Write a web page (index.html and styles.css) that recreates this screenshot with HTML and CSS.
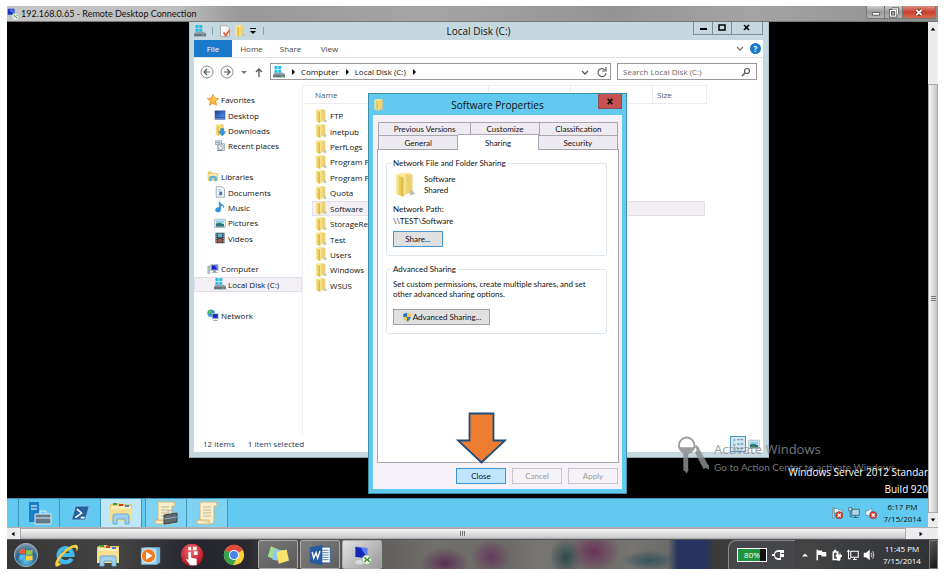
FILE: index.html
```html
<!DOCTYPE html>
<html lang="en">
<head>
<meta charset="utf-8">
<title>192.168.0.65 - Remote Desktop Connection</title>
<link rel="stylesheet" href="styles.css">
</head>
<body>
<svg class="defs" aria-hidden="true">
  <defs>
    <linearGradient id="gold" x1="0" x2="1"><stop offset="0" stop-color="#fdf0a4"/><stop offset="1" stop-color="#dcae33"/></linearGradient>
    <linearGradient id="blue" x1="0" y1="0" x2="1" y2="1"><stop offset="0" stop-color="#1d3f96"/><stop offset="1" stop-color="#4f9be6"/></linearGradient>
    <radialGradient id="orb" cx=".5" cy=".75" r=".7"><stop offset="0" stop-color="#5fc6ee"/><stop offset=".6" stop-color="#2b6591"/><stop offset="1" stop-color="#7d97a8"/></radialGradient>
    <radialGradient id="redball" cx=".45" cy=".3" r=".7"><stop offset="0" stop-color="#f06a72"/><stop offset="1" stop-color="#b50f1f"/></radialGradient>
  </defs>
  <symbol id="folder" viewBox="0 0 16 16"><path d="M2 1l4-1h6v13l-5 2z" fill="#f7e9a0"/><path d="M8 1h5v12l-5 1z" fill="#ecd071"/><path d="M2 1l5 2v13l-5-2z" fill="url(#gold)"/><path d="M7 3l2-1v12l-2 2z" fill="#f5e08a"/><path d="M12 11l3 3-4 1z" fill="#b9c2b5"/></symbol>
  <symbol id="star" viewBox="0 0 16 16"><path d="M8 .5l2.200 5 5.300.5-4 3.700 1.200 5.500L8 12.300l-4.700 2.900 1.200-5.500-4-3.700 5.300-.5z" fill="#fdb73a" stroke="#e8891c"/><path d="M8 3l1.400 3.400 3 .3-4.400 2z" fill="#ffe08a"/></symbol>
  <symbol id="desktop" viewBox="0 0 16 16"><path d="M1 2h14v12H1z" fill="#2c4f9e"/><path d="M2 3h12v8H2z" fill="url(#blue)"/><path d="M1 12h14v2H1z" fill="#5e87bb"/></symbol>
  <symbol id="downloads" viewBox="0 0 16 16"><use href="#folder"/><path d="M9 6h4v4h3l-5 6-5-6h3z" fill="#2f93dc" stroke="#1e6db0" stroke-width=".5"/></symbol>
  <symbol id="recent" viewBox="0 0 16 16"><path d="M2 1h8v5H2zM5 5h9v9H5z" fill="#dce6ec" stroke="#8fa2ae"/><circle cx="9" cy="9" r="3.500" fill="#fff" stroke="#7f95a5"/><path d="M9 7v2h2M3 3h5M4 14h8" stroke="#667f91" fill="none"/></symbol>
  <symbol id="libraries" viewBox="0 0 16 16"><path d="M1 2h5l1 2h8v10H1z" fill="#e7c765"/><path d="M2 5h12v7H2z" fill="#f9ebae"/><path d="M3 15V9q5-3 10 0v6h-3v-4H6v4z" fill="#56b4df"/></symbol>
  <symbol id="document" viewBox="0 0 16 16"><path d="M3 1h8l3 3v11H3z" fill="#f7fafc" stroke="#8799a6"/><path d="M5 5h4M5 7h6M5 12h6" stroke="#86a9c3"/><path d="M7 8h4v4H7z" fill="#3f7db4"/></symbol>
  <symbol id="music" viewBox="0 0 16 16"><path d="M8 1c0 4 6 3 5 8-1-3-3-3-4-3v6a3.500 3 0 1 1-2-3V1z" fill="#2a96dc" stroke="#1b6fb1" stroke-width=".5"/></symbol>
  <symbol id="picture" viewBox="0 0 16 16"><path d="M1 3h14v11H1z" fill="#fff" stroke="#8fa4b2"/><path d="M2.500 4.500h11v4h-11z" fill="#8ed1ef"/><path d="M2.500 9q5-3 11 1v3h-11z" fill="#2c8068"/><path d="M3 10q5 1 10-1v2H3z" fill="#1b5f95"/></symbol>
  <symbol id="video" viewBox="0 0 16 16"><path d="M2 1h12v14H2z" fill="#34404c"/><path d="M5 2h6v5H5z" fill="#56b6d9"/><path d="M5 9h6v5H5z" fill="#b15141"/><path d="M3.500 2v13M12.500 2v13" stroke="#dde3e7" stroke-dasharray="1.500 1.500"/></symbol>
  <symbol id="computer" viewBox="0 0 16 16"><path d="M1 4h3v10H1z" fill="#b8c3cc" stroke="#7e8c97" stroke-width=".5"/><path d="M5 2h10v8H5z" fill="#dfe6ec" stroke="#7b8993" stroke-width=".6"/><path d="M6 3h8v6H6z" fill="#1a28b4"/><path d="M10 3h4v6z" fill="#6a84e8"/><path d="M8 10h4v2h2v1H6v-1h2z" fill="#929fa8"/></symbol>
  <symbol id="disk" viewBox="0 0 16 16"><path d="M2 0h4v4H2zM7 0h4v4H7zM2 5h4v4H2zM7 5h4v4H7z" fill="#20bdf0"/><path d="M2 9h11l3 2v4H0v-3z" fill="#8e9ba5"/><path d="M0 12h16v3H0z" fill="#65737e"/><path d="M10 13h4v1h-4z" fill="#63e05a"/></symbol>
  <symbol id="network" viewBox="0 0 16 16"><circle cx="5.500" cy="5.500" r="5" fill="#2d98dd"/><path d="M2 2q4-2 5 1L4 7 1 5zM7 6l3 1-3 3z" fill="#58b947"/><path d="M7 6h8v7H7z" fill="#1e33b8" stroke="#cbd4dd"/><path d="M8 15h6v1H8z" fill="#8997a3"/></symbol>
  <symbol id="rdp" viewBox="0 0 16 16"><path d="M1 1h9v8H1z" fill="#1b30c4"/><path d="M2 2l7 6V2z" fill="#5173eb"/><path d="M3 11h7v2H3z" fill="#b5bcc3"/><circle cx="11" cy="11.500" r="4.500" fill="#f0f4ee" stroke="#a9b4a5" stroke-width=".7"/><path d="M9 9l2 2-2 2M13.500 9.500l-2 2 2 2" stroke="#3b9a33" stroke-width="1.300" fill="none"/></symbol>
  <symbol id="check" viewBox="0 0 16 16"><path d="M2 1h9l3 3v11H2z" fill="#fafafa" stroke="#9b9ea2"/><path d="M6 10l3 4 5-7" stroke="#e35c35" stroke-width="2.400" fill="none"/></symbol>
  <symbol id="shield" viewBox="0 0 16 16"><path d="M8 0l7 2v5q0 6-7 9-7-3-7-9V2z" fill="#c7d3dc"/><path d="M8 1.500V8H2V3zM8 8h6q-1 5-6 7z" fill="#2977cd"/><path d="M8 1.500V8h6V3zM8 8H2q1 5 6 7z" fill="#f6cd35"/></symbol>
  <symbol id="explorer" viewBox="0 0 26 24"><path d="M2 4l4-2h6l1 1h11v17H2z" fill="#e8c869"/><path d="M3 5h20v14H3z" fill="#fbefb8"/><path d="M5 3h4" stroke="#29a34a" stroke-width="2"/><path d="M11 4h4" stroke="#d3382c" stroke-width="2"/><path d="M17 5h4" stroke="#3d80cd" stroke-width="2"/><path d="M2 8h22v12H2z" fill="#f5df91"/><path d="M5 23v-8q0-2 2-2h12q2 0 2 2v8h-4v-5H9v5z" fill="#9fd2ee" stroke="#6aa8ce"/></symbol>
  <symbol id="scroll" viewBox="0 0 24 24"><path d="M5 1h15q3 0 2 4h-3v15q0 3-3 3H4q-3 0-2-4h3z" fill="#f9eecb" stroke="#cdb67c"/><path d="M8 6h8M8 9h8M8 12h8M8 15h8" stroke="#c3b68e"/><path d="M2 19h12q0 4 2 4" stroke="#cdb67c" fill="#efdca5"/></symbol>
  <symbol id="flag" viewBox="0 0 16 16"><path d="M2 1h2v14H2zM4 2h5l1 2h5v6H9L8 8H4z"/></symbol>
  <symbol id="screen" viewBox="0 0 16 16"><path d="M5 3h10v8H5zM8 14h5M10 11v3M2 1v5M2 6v7h3M0 3h4" fill="none" stroke="currentColor" stroke-width="1.400"/></symbol>
  <symbol id="speaker" viewBox="0 0 16 16"><path d="M1 5h3l5-4v14l-5-4H1z"/></symbol>
  <symbol id="badge" viewBox="0 0 16 16"><circle cx="11" cy="11" r="5" fill="#e5382c"/><path d="M9 9l4 4m0-4l-4 4" stroke="#fff" stroke-width="1.500"/></symbol>
</svg>

<main class="rdp">
  <header class="rdp-title">
    <svg class="i12"><use href="#rdp"/></svg>
    <h1>192.168.0.65 - Remote Desktop Connection</h1>
    <div class="aero">
      <button aria-label="Minimize"><svg viewBox="0 0 20 12"><path d="M6 6h8v3H6z" fill="#fff" stroke="#555"/></svg></button>
      <button aria-label="Restore"><svg viewBox="0 0 20 12"><path d="M8 2h6v6M6 4h6v6H6z" fill="none" stroke="#444" stroke-width="3"/><path d="M8 2h6v6M6 4h6v6H6z" fill="none" stroke="#fff" stroke-width="1.400"/></svg></button>
      <button class="red" aria-label="Close"><svg viewBox="0 0 20 12"><path d="M7 3l6 6m0-6L7 9" stroke="#7b2a22" stroke-width="4"/><path d="M7 3l6 6m0-6L7 9" stroke="#fff" stroke-width="2"/></svg></button>
    </div>
  </header>

  <div class="session">
    <section class="remote">
      <div class="desk">
        <section class="explorer" aria-label="Local Disk (C:)">
          <header class="ex-title">
            <div class="quick">
              <svg class="i12"><use href="#disk"/></svg><i></i>
              <svg class="i12"><use href="#check"/></svg>
              <svg class="i12"><use href="#folder"/></svg>
              <svg class="i8" viewBox="0 0 8 8"><path d="M1 1h6v1H1zM1 4h6L4 7z"/></svg><i></i>
            </div>
            <h2>Local Disk (C:)</h2>
            <div class="caption">
              <button aria-label="Minimize"><svg viewBox="0 0 10 10"><path d="M2 5h7v2H2z"/></svg></button>
              <button aria-label="Maximize"><svg viewBox="0 0 10 10"><path d="M2 2h6v5H2z" fill="none" stroke="#000" stroke-width="1.500"/></svg></button>
              <button class="wide" aria-label="Close"><svg viewBox="0 0 10 10"><path d="M2 2l5 5m0-5L2 7" stroke="#000" stroke-width="1.600"/></svg></button>
            </div>
          </header>
          <nav class="ribbon">
            <a class="file" href="#">File</a><a href="#">Home</a><a href="#">Share</a><a href="#">View</a>
            <span class="help"><svg class="i8" viewBox="0 0 8 8"><path d="M1 2l3 3 3-3" fill="none" stroke="#777" stroke-width="1.300"/></svg><button class="q" aria-label="Help">?</button></span>
          </nav>
          <div class="address">
            <svg class="i14" viewBox="0 0 14 14"><circle cx="7" cy="7" r="6" fill="#fff" stroke="#8a8a8a"/><path d="M10 7H4m3-3L4 7l3 3" fill="none" stroke="#555" stroke-width="1.200"/></svg>
            <svg class="i14" viewBox="0 0 14 14"><circle cx="7" cy="7" r="6" fill="#fff" stroke="#8a8a8a"/><path d="M4 7h6M7 4l3 3-3 3" fill="none" stroke="#555" stroke-width="1.200"/></svg>
            <svg class="i8" viewBox="0 0 8 8"><path d="M1 3h6L4 6z" fill="#777"/></svg>
            <svg class="i10" viewBox="0 0 10 10"><path d="M5 10V2M2 5l3-3 3 3" fill="none" stroke="#555" stroke-width="1.300"/></svg>
            <div class="crumbs">
              <svg class="i12"><use href="#disk"/></svg>
              <svg class="i8" viewBox="0 0 8 8"><path d="M3 1l3 3-3 3z"/></svg><span>Computer</span>
              <svg class="i8" viewBox="0 0 8 8"><path d="M3 1l3 3-3 3z"/></svg><span>Local Disk (C:)</span>
              <svg class="i8" viewBox="0 0 8 8"><path d="M3 1l3 3-3 3z"/></svg>
              <svg class="i8 push" viewBox="0 0 8 8"><path d="M1 3l3 3 3-3" fill="none" stroke="#555" stroke-width="1.300"/></svg>
              <svg class="i10" viewBox="0 0 10 10"><path d="M8 3a4 4 0 1 0 1 3M9 0v4H5" fill="none" stroke="#666" stroke-width="1.200"/></svg>
            </div>
            <label class="search"><input type="text" aria-label="Search" placeholder="Search Local Disk (C:)"><svg class="i10" viewBox="0 0 10 10"><circle cx="6" cy="4" r="2.500" fill="none" stroke="#555" stroke-width="1.200"/><path d="M4 6L1 9" stroke="#555" stroke-width="1.500"/></svg></label>
          </div>
          <div class="ex-body">
            <ul class="tree">
              <li class="top"><svg class="i12"><use href="#star"/></svg>Favorites</li>
              <li><svg class="i12"><use href="#desktop"/></svg>Desktop</li>
              <li><svg class="i12"><use href="#downloads"/></svg>Downloads</li>
              <li><svg class="i12"><use href="#recent"/></svg>Recent places</li>
              <li class="top gap"><svg class="i12"><use href="#libraries"/></svg>Libraries</li>
              <li><svg class="i12"><use href="#document"/></svg>Documents</li>
              <li><svg class="i12"><use href="#music"/></svg>Music</li>
              <li><svg class="i12"><use href="#picture"/></svg>Pictures</li>
              <li><svg class="i12"><use href="#video"/></svg>Videos</li>
              <li class="top gap"><svg class="i12"><use href="#computer"/></svg>Computer</li>
              <li class="on"><svg class="i12"><use href="#disk"/></svg>Local Disk (C:)</li>
              <li class="top gap"><svg class="i12"><use href="#network"/></svg>Network</li>
            </ul>
            <table class="files">
              <thead><tr><th>Name</th><th>Date modified</th><th>Type</th><th>Size</th></tr></thead>
              <tbody>
                <tr><td><svg class="i14"><use href="#folder"/></svg>FTP</td></tr>
                <tr><td><svg class="i14"><use href="#folder"/></svg>inetpub</td></tr>
                <tr><td><svg class="i14"><use href="#folder"/></svg>PerfLogs</td></tr>
                <tr><td><svg class="i14"><use href="#folder"/></svg>Program Files</td></tr>
                <tr><td><svg class="i14"><use href="#folder"/></svg>Program Files (x86)</td></tr>
                <tr><td><svg class="i14"><use href="#folder"/></svg>Quota</td></tr>
                <tr class="on"><td><svg class="i14"><use href="#folder"/></svg>Software</td></tr>
                <tr><td><svg class="i14"><use href="#folder"/></svg>StorageReports</td></tr>
                <tr><td><svg class="i14"><use href="#folder"/></svg>Test</td></tr>
                <tr><td><svg class="i14"><use href="#folder"/></svg>Users</td></tr>
                <tr><td><svg class="i14"><use href="#folder"/></svg>Windows</td></tr>
                <tr><td><svg class="i14"><use href="#folder"/></svg>WSUS</td></tr>
              </tbody>
            </table>
          </div>
          <footer class="ex-status">
            <span>12 items</span><span>1 item selected</span>
            <div class="views">
              <button class="on" aria-label="Details"><svg viewBox="0 0 16 16"><path d="M2 2h3v3H2zM2 7h3v3H2zM2 12h3v3H2z" fill="#a5bccb"/><path d="M7 3h3m1 0h3M7 8h3m1 0h3M7 13h3m1 0h3" stroke="#7d97a8" stroke-width="1.500"/></svg></button>
              <button aria-label="Large icons"><svg viewBox="0 0 16 16"><use href="#picture"/></svg></button>
            </div>
          </footer>
        </section>

        <section class="dialog" role="dialog" aria-label="Software Properties">
          <header class="dl-title">
            <svg class="i12"><use href="#folder"/></svg>
            <h2>Software Properties</h2>
            <button aria-label="Close"><svg viewBox="0 0 10 10"><path d="M2 2l5 6m0-6L2 8" stroke="#000" stroke-width="1.700"/></svg></button>
          </header>
          <div class="dl-body">
            <div class="tabs back"><button>Previous Versions</button><button>Customize</button><button>Classification</button></div>
            <div class="tabs front"><button>General</button><button class="on">Sharing</button><button>Security</button></div>
            <div class="panel">
              <fieldset class="share">
                <legend>Network File and Folder Sharing</legend>
                <div class="item"><svg class="i24"><use href="#folder"/></svg><p>Software<br>Shared</p></div>
                <p class="path">Network Path:<br>\\TEST\Software</p>
                <button class="btn blue">Share...</button>
              </fieldset>
              <fieldset class="adv">
                <legend>Advanced Sharing</legend>
                <p>Set custom permissions, create multiple shares, and set other advanced sharing options.</p>
                <button class="btn long"><svg class="i10"><use href="#shield"/></svg>Advanced Sharing...</button>
              </fieldset>
            </div>
            <div class="actions"><button class="btn primary">Close</button><button class="btn" disabled>Cancel</button><button class="btn" disabled>Apply</button></div>
          </div>
          <svg class="arrow" viewBox="0 0 50 52"><path d="M13 1.500h24v27h11.500L25 50.500 1.500 28.500H13z" fill="#ed7d31" stroke="#1f4e79" stroke-width="1.800"/></svg>
        </section>

        <div class="activate">
          <svg viewBox="0 0 32 38"><g fill="none" stroke="#8a8c8e"><circle cx="9" cy="9" r="8" stroke-width="2"/><path d="M8 17v18" stroke-width="5"/><path d="M20 15l9 17" stroke-width="6"/><path d="M18 10q4 2 2 7" stroke-width="3"/></g><path d="M1 11h16q-2 6-8 7-6-1-8-7zM6 34h5l-2 4zM26 31l6 3v-5z" fill="#8a8c8e"/></svg>
          <p><b>Activate Windows</b><br>Go to Action Center to activate Windows.</p>
        </div>
        <p class="build">Windows Server 2012 Standar<br>Build 920</p>
      </div>

      <footer class="srv-bar">
        <button aria-label="Server Manager"><svg viewBox="0 0 26 24"><path d="M3 1h10v20H3z" fill="#1f7cc6"/><path d="M5 5h6M5 8h6" stroke="#fff"/><path d="M9 13h16v10H9z" fill="#60798b" stroke="#e1edf4"/><path d="M14 13v-3h6v3M9 17h16" stroke="#e1edf4" fill="none"/></svg></button>
        <button aria-label="PowerShell"><svg class="ps" viewBox="0 0 26 24"><path d="M7 3h18l-5 18H2z" fill="#28629d" stroke="#9ac7e6"/><path d="M9 7l6 5-8 6M14 18h5" fill="none" stroke="#fff" stroke-width="2"/></svg></button>
        <button class="on" aria-label="File Explorer"><svg><use href="#explorer"/></svg></button>
        <button class="lit" aria-label="Tools"><svg viewBox="0 0 26 24"><use href="#scroll" width="24" height="24"/><path d="M11 14l13-2v9l-13 2z" fill="#5e6970" stroke="#39434a"/><path d="M15 13v-3l5-1v3M11 18l13-2" fill="none" stroke="#a2adb4"/></svg></button>
        <button class="lit" aria-label="Script"><svg><use href="#scroll"/></svg></button>
        <div class="srv-tray">
          <svg class="i12" viewBox="0 0 16 16" fill="#e9f3f7" stroke="#4b6977" stroke-width=".7"><use href="#flag"/><use href="#badge"/></svg>
          <svg class="i12" viewBox="0 0 16 16"><path d="M5 3h10v8H5z" fill="#a9d9ec" stroke="#33505d"/><path d="M7 14h7M10 11v3M3 6v7h3" fill="none" stroke="#33505d"/><path d="M1 1h4v4H1z" fill="#eee" stroke="#33505d"/></svg>
          <svg class="i12" viewBox="0 0 16 16" fill="#e9f3f7" stroke="#4b6977" stroke-width=".7"><use href="#speaker"/><use href="#badge"/></svg>
        </div>
        <p class="clock">6:17 PM<br>7/15/2014</p>
      </footer>
    </section>
    <div class="vbar"><svg viewBox="0 0 8 8"><path d="M1 6l3-4 3 4z"/></svg><div class="thumb"></div><svg viewBox="0 0 8 8"><path d="M1 2l3 4 3-4z"/></svg></div>
    <div class="hbar"><svg viewBox="0 0 8 8"><path d="M6 1L2 4l4 3z"/></svg><div class="thumb"></div><svg viewBox="0 0 8 8"><path d="M2 1l4 3-4 3z"/></svg></div>
  </div>

  <footer class="taskbar">
    <button aria-label="Start"><svg viewBox="0 0 28 28"><circle cx="14" cy="14" r="12.500" fill="url(#orb)" stroke="#a3b5c2"/><path d="M7 9q3-2 6-1v5q-3-1-6 0z" fill="#e9603a"/><path d="M14 8q3 2 7 0v5q-4 2-7 0z" fill="#93c54b"/><path d="M7 14q3-1 6 0v5q-3-1-6 1z" fill="#58b5ee"/><path d="M14 14q3 2 7 0v5q-4 2-7 0z" fill="#fbce3c"/></svg></button>
    <button aria-label="Internet Explorer"><svg viewBox="0 0 28 28"><path d="M20 18a7.500 7.500 0 1 1 1-4H8" fill="none" stroke="#43b8ef" stroke-width="4.500"/><path d="M3 26C-1 21 16 2 25 3c3 1 2 5 0 8 2-8-6-5-13 2S4 24 10 23c-3 3-6 4-7 3z" fill="#f8cf44"/></svg></button>
    <button aria-label="Explorer"><svg><use href="#explorer"/></svg></button>
    <button class="small" aria-label="Media Player"><svg viewBox="0 0 28 28"><path d="M6 4h21v20l-4 2z" fill="#6fb5dc"/><path d="M3 5h20v21H3z" fill="#a6d8ef" stroke="#6caed0"/><circle cx="12" cy="15" r="9" fill="#ef7b1f" stroke="#fff"/><path d="M9 10l8 5-8 5z" fill="#fff"/></svg></button>
    <button aria-label="Remote Touch"><svg viewBox="0 0 28 28"><circle cx="14" cy="14" r="12" fill="url(#redball)"/><path d="M10 5h3v4h-3zM15 5h4v4h-4zM16 10h4v4h-4z" fill="#fff"/><path d="M10 11h3v6l6 1v7h-7l-5-7 3 1z" fill="#fff"/></svg></button>
    <button class="small" aria-label="Chrome"><svg viewBox="0 0 28 28"><circle cx="14" cy="14" r="13" fill="#fcd13c"/><path d="M14 14L2.800 7.500A13 13 0 0 1 25.200 7.500z" fill="#dd4b3e"/><path d="M14 14L2.800 7.500A13 13 0 0 0 13 27l5-10z" fill="#38a154"/><circle cx="14" cy="14" r="6.500" fill="#fff"/><circle cx="14" cy="14" r="5" fill="#4385e8"/></svg></button>
    <button class="open" aria-label="Sticky Notes"><svg viewBox="0 0 28 28"><path d="M5 3l12 5-4 13L1 16z" fill="#a5df8f"/><path d="M8 7l13 1-1 14-13-2z" fill="#8bcaf4"/><path d="M12 10l13-3 3 14-13 4z" fill="#fbe46a"/></svg></button>
    <button class="open" aria-label="Word"><svg viewBox="0 0 28 28"><path d="M15 4h12v20H15z" fill="#fff" stroke="#285b9f"/><path d="M17 8h8M17 11h8M17 14h8M17 17h8M17 20h8" stroke="#285b9f"/><path d="M1 4l16-3v26L1 24z" fill="#285b9f"/><path d="M4 10l2 8 3-7 2 7 3-9" fill="none" stroke="#fff" stroke-width="1.800"/></svg></button>
    <button class="open on" aria-label="Remote Desktop"><svg viewBox="0 0 28 28"><path d="M5 3l16 2v14L5 17z" fill="#1527b8" stroke="#cfd5ea"/><path d="M12 4l9 1v13z" fill="#5c7ae8"/><ellipse cx="12" cy="23" rx="7" ry="3" fill="#d7d9db"/><circle cx="20" cy="20" r="6" fill="#eef3ea" stroke="#98a294"/><path d="M17 17l3 3-3 3M24 17l-3 3 3 3" stroke="#379230" stroke-width="1.800" fill="none"/></svg></button>
    <div class="battery"><span class="cell">80%</span><svg class="i14" viewBox="0 0 14 14"><path d="M6 2h6v3H9v1h3v3H9v3H6a5 5 0 0 1-4-4H0V6h2a5 5 0 0 1 4-4z" fill="#fff"/><path d="M6 4h2v6H6a3 3 0 0 1 0-6z" fill="#45474a"/></svg></div>
    <div class="tray">
      <svg viewBox="0 0 16 16"><path d="M4 10l4-4 4 4z"/></svg>
      <svg viewBox="0 0 16 16"><use href="#flag"/></svg>
      <svg viewBox="0 0 16 16"><path d="M2 3h2V1h3v2h3v12H2z"/><path d="M4 5h4v8H4z" fill="#555"/><path d="M8 5v3m4-3v3M7 8h7v2l-2 2v3h-3v-3l-2-2z" stroke="#fff"/></svg>
      <svg viewBox="0 0 16 16"><use href="#screen"/></svg>
      <svg viewBox="0 0 16 16"><use href="#speaker"/><path d="M11 5q2 3 0 6M13 3q3 5 0 10" fill="none" stroke="#fff"/></svg>
    </div>
    <p class="clock">11:45 PM<br>7/15/2014</p>
    <button class="peek" aria-label="Show desktop"></button>
  </footer>
</main>
</body>
</html>
```
FILE: styles.css
```css
* { box-sizing: border-box; }
html, body { height: 100%; }
body { margin: 0; padding: 6px 8px 4px 7px; background: #fff; color: #111; font: 8px/11px "Open Sans", "Noto Sans", sans-serif; }
h1, h2, p, ul { margin: 0; padding: 0; font-weight: 400; }
button { margin: 0; padding: 0; border: 0; background: none; font: inherit; color: inherit; display: flex; align-items: center; justify-content: center; }
a { color: inherit; text-decoration: none; }
svg { flex: none; display: block; }
.defs { position: absolute; width: 0; height: 0; }
.i8 { width: 8px; height: 8px; }
.i10 { width: 10px; height: 10px; }
.i12 { width: 12px; height: 12px; }
.i14 { width: 14px; height: 14px; }
.i24 { width: 24px; height: 24px; }

.rdp { height: 100%; display: flex; flex-direction: column; }
.rdp-title { height: 16px; flex: none; display: flex; align-items: center; gap: 2px; padding-right: 2px; border-bottom: 1px solid #777; background: linear-gradient(90deg, #c6c6c6, #bebebe 18%, #999 25%, #a5a5a5 45%, #949494 65%, #a4a4a4 80%, #8e8e8e); }
.rdp-title h1 { font: 9px/14px Lato, "Open Sans", sans-serif; }
.aero { margin-left: auto; align-self: flex-start; display: flex; border: 1px solid #777; border-top: 0; border-radius: 0 0 3px 3px; overflow: hidden; }
.aero button { width: 18px; height: 12px; border-right: 1px solid #777; background: linear-gradient(#ccc, #999 50%, #b5b5b5); }
.aero button svg { width: 18px; height: 11px; }
.aero .red { width: 32px; border: 0; background: linear-gradient(#e09488, #c8402c 50%, #dc6a50); }

.session { flex: 1; min-height: 0; display: grid; grid-template: minmax(0, 1fr) 12px / minmax(0, 1fr) 10px; }
.remote { display: flex; flex-direction: column; min-height: 0; }
.desk { flex: 1; min-height: 0; position: relative; overflow: hidden; background: #000; }

.explorer { position: absolute; left: 182px; top: 0; width: 580px; height: 436px; display: flex; flex-direction: column; padding: 0 5px 5px 4px; background: #c5d8df; border: 1px solid #b0c3ca; border-top: 0; border-bottom-color: #93a5ac; }
.ex-title { height: 18px; display: grid; grid-template-columns: 1fr auto 1fr; align-items: center; }
.ex-title h2 { font-size: 10px; line-height: 16px; }
.quick { display: flex; align-items: center; gap: 3px; }
.quick i { width: 1px; height: 8px; margin: 0 3px; background: #8ea2aa; }
.caption { display: flex; justify-self: end; align-self: start; border: 1px solid #7e9098; border-top: 0; }
.caption button { width: 19px; height: 12px; border-right: 1px solid #7e9098; }
.caption svg { width: 10px; height: 10px; }
.caption .wide { width: 30px; border: 0; }
.ribbon { height: 18px; display: flex; align-items: stretch; background: #fff; border-bottom: 1px solid #dfe3e6; line-height: 18px; color: #444; }
.ribbon a { width: 39px; text-align: center; }
.ribbon .file { width: 38px; background: #1979ca; color: #fff; }
.help { margin-left: auto; display: flex; align-items: center; gap: 6px; padding-right: 2px; }
.q { width: 11px; height: 11px; border-radius: 50%; background: #1979ca; color: #fff; font-weight: 700; }
.address { height: 27px; display: flex; align-items: center; gap: 6px; padding: 0 6px; background: #fff; }
.crumbs { flex: 1; height: 17px; display: flex; align-items: center; gap: 4px; padding: 0 3px 0 2px; border: 1px solid #999; }
.push { margin-left: auto; margin-right: 4px; }
.search { width: 140px; height: 17px; display: flex; align-items: center; padding: 0 5px; border: 1px solid #999; }
.search input { flex: 1; min-width: 0; padding: 0; border: 0; outline: 0; font: inherit; background: none; }
.search input::placeholder { color: #666; opacity: 1; }
.ex-body { flex: 1; min-height: 0; display: flex; align-items: flex-start; background: #fff; }
.tree { flex: none; width: 108px; height: 238px; padding-top: 7px; list-style: none; display: grid; grid-template-rows: repeat(15, 1fr); }
.tree li { display: flex; align-items: center; gap: 2px; padding-left: 20px; white-space: nowrap; }
.tree .top { padding-left: 13px; }
.tree .gap { grid-row: span 2; padding-top: 15px; }
.tree .on, .files .on { background: #f3f0f5; outline: 1px solid #e3dfe6; outline-offset: -1px; }
.files { display: block; flex: 1; align-self: stretch; border-left: 1px solid #f1f1f4; }
.files thead, .files tbody { display: block; }
.files tr { display: grid; grid-template-columns: 186px 82px 82px 54px; align-items: stretch; }
.files th { height: 19px; padding: 0 4px; border: solid #ebebf0; border-width: 1px 1px 1px 0; line-height: 18px; text-align: left; font-weight: 400; color: #4a5b78; }
.files th:first-child { padding-left: 12px; }
.files tbody { margin: 4px 0 0 9px; height: 185px; display: grid; grid-auto-rows: 1fr; }
.files tbody tr { width: 393px; }
.files td { display: flex; align-items: center; gap: 2px; padding: 0 0 0 2px; white-space: nowrap; }
.ex-status { height: 17px; display: flex; align-items: center; gap: 13px; padding: 0 3px 0 9px; background: #fff; color: #28405f; }
.views { margin-left: auto; display: flex; align-items: center; gap: 2px; }
.views button { width: 12px; height: 12px; }
.views .on { width: 16px; height: 16px; border: 1px solid #4a9bc4; background: #cfe9f7; }
.views svg { width: 100%; height: 100%; }

.dialog { position: absolute; left: 361px; top: 71px; width: 259px; height: 401px; display: flex; flex-direction: column; padding: 0 4px 4px; border: 1px solid #3f8cab; background: #62c9ef; font: 8px/10px Lato, "Liberation Sans", sans-serif; }
.dl-title { height: 21px; display: grid; grid-template-columns: 1fr auto 1fr; align-items: center; font-family: "Open Sans", "Noto Sans", sans-serif; }
.dl-title h2 { font-size: 10px; line-height: 16px; }
.dl-title button { width: 24px; height: 15px; justify-self: end; align-self: start; background: #c75050; border: 1px solid #8d4c57; border-top: 0; }
.dl-title button svg { width: 9px; height: 9px; }
.dl-body { flex: 1; display: flex; flex-direction: column; padding: 7px 3px 5px 4px; background: #f6f1f8; }
.tabs { display: grid; margin: 0 1px; }
.tabs button { height: 14px; border: 1px solid #a9a6ad; border-bottom: 0; background: #eeeaf1; }
.tabs button + button { border-left: 0; }
.back { grid-template-columns: 93fr 68fr 78fr; }
.back button { height: 13px; }
.front { grid-template-columns: 80fr 80fr 79fr; align-items: end; }
.front .on { height: 16px; margin: -2px 0 -1px; position: relative; background: #fff; border-color: #a9a6ad; }
.panel { flex: 1; padding: 7px 11px 0 8px; background: #fff; border: 1px solid #a9a6ad; }
fieldset { margin: 0 0 7px; padding: 0 6px 8px; border: 1px solid #dde6ec; border-radius: 2px; }
legend { padding: 0 2px; margin-left: -2px; line-height: 12px; }
.item { display: flex; align-items: center; gap: 7px; line-height: 11px; margin: 4px 0 6px; }
.path { line-height: 12px; margin-bottom: 4px; }
.adv p { margin: 4px 0 10px; }
.btn { min-width: 50px; height: 16px; border: 1px solid #a0a0a3; background: #e0e0e1; }
.btn.blue { border-color: #4795d1; }
.btn.long { width: 97px; gap: 1px; }
.btn.primary { background: #bfe6fd; border-color: #3f94cf; }
.btn:disabled { color: #99969c; background: #f6f3f8; border-color: #c9c6cc; }
.actions { display: flex; justify-content: flex-end; gap: 6px; padding: 5px 1px 0 0; }
.arrow { position: absolute; left: 87px; top: 318px; width: 51px; height: 52px; }

.activate { position: absolute; left: 671px; top: 414px; display: flex; gap: 5px; color: #8a8c8e; opacity: .85; white-space: nowrap; font: 10px/17px Lato, "Open Sans", sans-serif; }
.activate svg { width: 31px; height: 38px; }
.activate p { padding-top: 5px; }
.activate b { font: 13px/17px "Open Sans", sans-serif; }
.build { position: absolute; right: 0; top: 442px; color: #fff; line-height: 17px; white-space: nowrap; text-align: right; font-size: 10px; }

.srv-bar { flex: none; height: 29px; display: flex; padding-left: 11px; border-top: 1px solid #3f91b3; background: #62caf0; }
.srv-bar button { width: 42px; border: solid #4296b8; border-width: 0 1px; margin-right: -1px; }
.srv-bar button svg { width: 26px; height: 24px; }
.srv-bar button .ps { width: 20px; height: 20px; }
.srv-bar .on { background: #bfe7f7; margin-right: 3px; }
.srv-bar .lit { background: #7ed3f2; }
.srv-tray { margin-left: auto; display: flex; align-items: center; gap: 5px; }
.clock { text-align: center; line-height: 12px; align-self: center; }
.srv-bar .clock { width: 51px; }

.vbar, .hbar { display: flex; background: #ececee; }
.vbar { flex-direction: column; padding: 4px 0; }
.vbar svg, .hbar svg { width: 6px; height: 6px; }
.vbar svg { margin: 0 auto; }
.vbar .thumb { flex: 1; margin: 52px 0 4px; border: 1px solid #aaa; background: linear-gradient(90deg, #f6f6f6, #c4c4c8); }
.hbar { grid-column: 1 / -1; padding: 0 14px 0 3px; align-items: stretch; border-top: 1px solid #b0b0b0; }
.hbar svg { margin: auto 0; }
.hbar .thumb { flex: 1; margin: 0 12px 0 4px; border: 1px solid #aaa; background: linear-gradient(#f6f6f6, #c8c8cb); }
.thumb { display: flex; align-items: center; justify-content: center; }
.hbar .thumb::after { content: ""; width: 6px; height: 5px; background: repeating-linear-gradient(90deg, #777 0 1px, #ddd 1px 2px); }
.vbar .thumb::after { content: ""; width: 5px; height: 6px; background: repeating-linear-gradient(#777 0 1px, #ddd 1px 2px); }

.taskbar { flex: none; height: 30px; display: flex; align-items: stretch; border-top: 1px solid #55565a; color: #fff; background:
  radial-gradient(ellipse 24px 16px at 47% 80%, #5a2f54, transparent),
  radial-gradient(ellipse 20px 18px at 52% 60%, #653a5c, transparent),
  radial-gradient(ellipse 16px 20px at 60% 60%, #2f4a4b, transparent),
  radial-gradient(ellipse 26px 20px at 63% 40%, #6b3357, transparent),
  radial-gradient(ellipse 28px 10px at 69% 70%, #35515a, transparent),
  linear-gradient(90deg, #363636, #444 12%, #24252e 20%, #2a2930 26%, #4d4949 30%, #666462 42%, #716f6b 46%, #6c6a67 54%, #777673 57%, #6d6b69 64%, #757471 67%, #6c6b6a 71%, #27345f 72%, #27345f 75%, #3c3a3b 76%, #444 86%, #3b3d40 90%, #303236); }
.taskbar > button { width: 42px; }
.taskbar > button svg { width: 26px; height: 26px; }
.taskbar > .small svg { width: 22px; height: 22px; }
.taskbar > button:first-child { width: 38px; }
.taskbar > .small + .open { margin-left: 3px; }
.taskbar > .open { width: 40px; margin-right: 2px; border: 1px solid #aaa; border-radius: 2px; background: linear-gradient(135deg, #999a, #6668); }
.taskbar > .open svg { width: 24px; height: 22px; }
.taskbar > .on { background: linear-gradient(135deg, #e2e2e2, #999); }
.battery { margin-left: auto; width: 67px; display: flex; align-items: center; gap: 5px; padding-left: 8px; border: 1px solid #888; border-width: 1px 0 0 1px; border-radius: 8px 0 0 0; background: #45474a; }
.cell { width: 30px; height: 14px; border: 1px solid #fff; text-align: center; line-height: 12px; background: linear-gradient(90deg, #1e9440 80%, #111 80%); }
.tray { display: flex; align-items: center; gap: 4px; padding-left: 4px; fill: #fff; color: #fff; }
.tray svg { width: 12px; height: 12px; }
.taskbar .clock { width: 54px; }
.taskbar > .peek { width: 9px; border: 1px solid #777; background: linear-gradient(135deg, #555, #18191b); }
```
